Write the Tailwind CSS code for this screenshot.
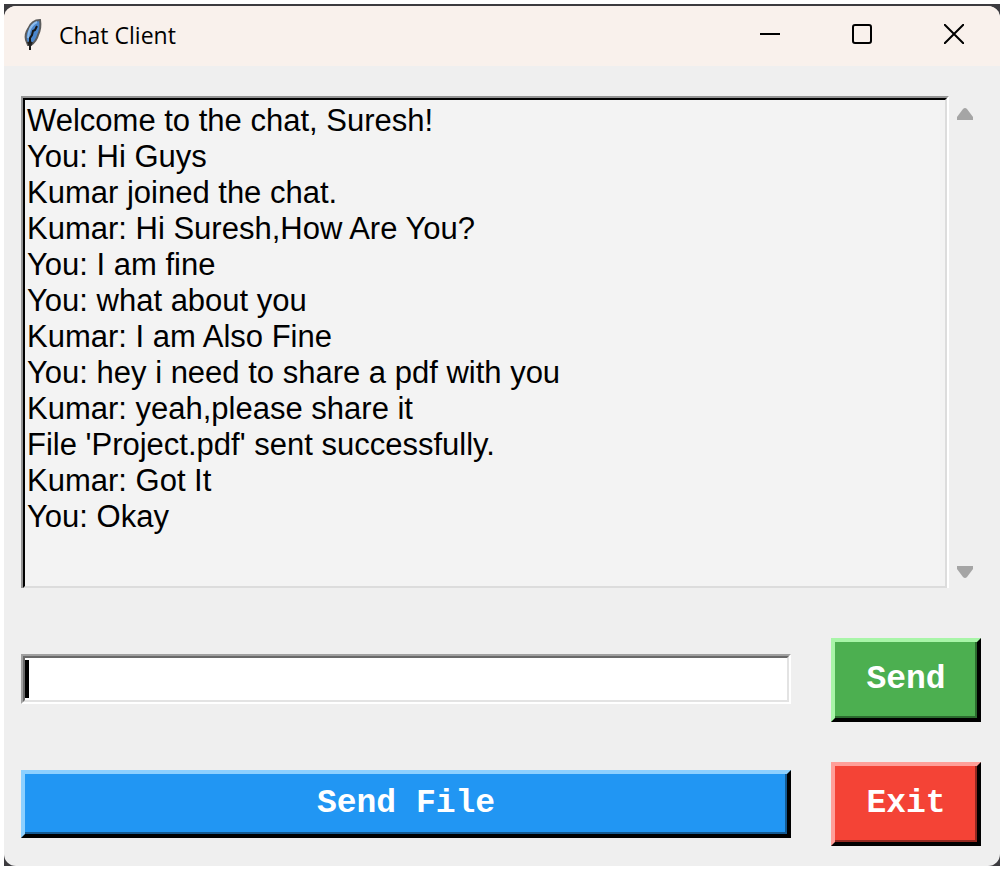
<!DOCTYPE html>
<html lang="en">
<head>
<meta charset="utf-8">
<meta name="viewport" content="width=device-width, initial-scale=1">
<title>Chat Client</title>
<script src="https://cdn.jsdelivr.net/npm/@tailwindcss/browser@4"></script>
</head>
<body class="flex min-h-screen bg-white p-1">
<div class="flex flex-1 bg-[#3c3b3f] pt-0.5">
<div class="flex flex-1 flex-col overflow-hidden rounded-xl bg-[#efefef]">
  <header class="flex h-[60px] items-center bg-[#f9f1ec] pl-4">
    <svg class="h-10 w-7" viewBox="0 0 28 40" aria-hidden="true">
      <path d="M20 4 C14 4 10 8 8 13 C6 16 5 20 6 24 L8 29 L11 29 C15 26 17 23 18 19 C20 15 21 10 20 4Z" fill="#4a86cc" stroke="#5c5c5c" stroke-width="2"/>
      <path d="M17 6 C12 8 10 12 9 16 L8 22" fill="none" stroke="#8dbcec" stroke-width="2"/>
      <path d="M17 10 L15 14 L13 15 L12 19 L10 22 L10 34" fill="none" stroke="#151515" stroke-width="2"/>
      <path d="M8 26L10 30L12 26" fill="none" stroke="#222" stroke-width="2"/>
    </svg>
    <h1 class="ml-[11px] flex-1 pb-0.5 font-['Open_Sans',sans-serif] text-[23px] leading-8 text-black">Chat Client</h1>
    <div class="flex h-full">
      <button type="button" aria-label="Minimize" class="flex h-14 w-[92px] items-center justify-center"><svg class="size-5" viewBox="0 0 20 20"><path d="M0 10H20" stroke="#000" stroke-width="2"/></svg></button>
      <button type="button" aria-label="Maximize" class="flex h-14 w-[92px] items-center justify-center"><svg class="size-5" viewBox="0 0 20 20"><rect x="1" y="1" width="18" height="18" rx="2" fill="none" stroke="#000" stroke-width="2"/></svg></button>
      <button type="button" aria-label="Close" class="flex h-14 w-[92px] items-center justify-center"><svg class="size-5" viewBox="0 0 20 20"><path d="M0 0L20 20M20 0L0 20" stroke="#000" stroke-width="2"/></svg></button>
    </div>
  </header>
  <main class="flex flex-1 flex-col pt-[30px] pr-[19px] pb-5 pl-[17px]">
    <div class="flex flex-1">
      <div class="flex flex-1 border-2 border-b-0 border-t-[#949494] border-r-white border-l-[#949494]">
        <textarea readonly aria-label="Chat messages" class="flex-1 resize-none overflow-hidden border-2 border-t-black border-r-[#dcdcdc] border-b-[#dcdcdc] border-l-black bg-[#f3f3f3] pt-[3px] pl-0.5 font-['Liberation_Sans',Arial,sans-serif] text-[31px] leading-9 text-black outline-none">Welcome to the chat, Suresh!
You: Hi Guys
Kumar joined the chat.
Kumar: Hi Suresh,How Are You?
You: I am fine
You: what about you
Kumar: I am Also Fine
You: hey i need to share a pdf with you
Kumar: yeah,please share it
File 'Project.pdf' sent successfully.
Kumar: Got It
You: Okay</textarea>
      </div>
      <div class="flex w-8 flex-col items-center justify-between pt-3 pb-2.5">
        <button type="button" aria-label="Scroll up"><svg class="h-3 w-4" viewBox="0 0 16 12"><path d="M6 1Q8 -1 10 1L16 9V12H0V9Z" fill="#a5a5a5"/></svg></button>
        <button type="button" aria-label="Scroll down"><svg class="h-3 w-4" viewBox="0 0 16 12"><path d="M0 0H16V3L10 11Q8 13 6 11L0 3Z" fill="#a5a5a5"/></svg></button>
      </div>
    </div>
    <form class="mt-[50px] grid grid-cols-[1fr_150px] items-center gap-10" onsubmit="return false">
      <div class="mb-0.5 border-2 border-t-[#a0a0a0] border-r-white border-b-white border-l-[#a0a0a0]">
        <div class="flex h-[46px] items-center border-2 border-t-[#696969] border-r-[#e3e3e3] border-b-[#e3e3e3] border-l-[#696969] bg-white">
          <span class="h-[38px] w-1 bg-black"></span>
          <input type="text" aria-label="Message" class="h-full min-w-0 flex-1 font-['Liberation_Sans',Arial,sans-serif] text-[31px] outline-none">
        </div>
      </div>
      <button type="submit" class="h-[84px] border-4 border-t-[#a8f5a8] border-r-black border-b-black border-l-[#a8f5a8] bg-[#4caf50] font-['Courier_New','Liberation_Mono',monospace] text-[33px] leading-9 font-bold text-white shadow-[inset_-2px_-2px_#2b6b2e]">Send</button>
      <button type="button" class="h-[68px] border-4 border-t-[#8dd0ff] border-r-black border-b-black border-l-[#8dd0ff] bg-[#2196f3] font-['Courier_New','Liberation_Mono',monospace] text-[33px] leading-9 font-bold text-white shadow-[inset_-2px_-2px_#145a92]">Send File</button>
      <button type="button" class="h-[84px] border-4 border-t-[#ff9f99] border-r-black border-b-black border-l-[#ff9f99] bg-[#f44336] font-['Courier_New','Liberation_Mono',monospace] text-[33px] leading-9 font-bold text-white shadow-[inset_-2px_-2px_#932820]">Exit</button>
    </form>
  </main>
</div>
</div>
</body>
</html>
